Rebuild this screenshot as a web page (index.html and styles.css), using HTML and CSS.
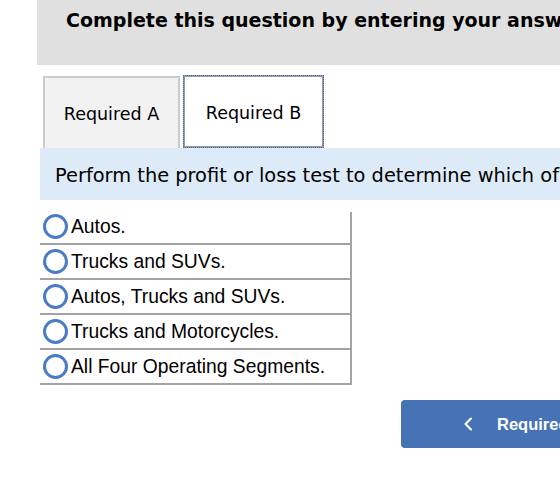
FILE: index.html
```html
<!DOCTYPE html>
<html lang="en">
<head>
<meta charset="utf-8">
<title>Required B</title>
<link rel="stylesheet" href="styles.css">
</head>
<body>
<div class="page">
  <div class="header">
    <h2 class="header-title">Complete this question by entering your answers in the tabs below.</h2>
  </div>
  <div class="tabs">
    <div class="tab">Required A</div>
    <div class="tab tab-active">Required B</div>
  </div>
  <div class="prompt">Perform the profit or loss test to determine which of the operating segments are reportable segments.</div>
  <div class="options">
    <label class="option"><span class="radio"></span><span class="option-text">Autos.</span></label>
    <label class="option"><span class="radio"></span><span class="option-text">Trucks and SUVs.</span></label>
    <label class="option"><span class="radio"></span><span class="option-text">Autos, Trucks and SUVs.</span></label>
    <label class="option"><span class="radio"></span><span class="option-text">Trucks and Motorcycles.</span></label>
    <label class="option"><span class="radio"></span><span class="option-text">All Four Operating Segments.</span></label>
  </div>
  <div class="nav">
    <button class="nav-btn" type="button">
      <svg class="chev" width="10" height="14" viewBox="0 0 10 14"><polyline points="8,1.5 2.5,7 8,12.5" fill="none" stroke="#ffffff" stroke-width="2" stroke-linecap="round" stroke-linejoin="round"/></svg>
      <span class="nav-label">Required A</span>
    </button>
  </div>
</div>
</body>
</html>
```
FILE: styles.css
```css
html, body {
  margin: 0;
  padding: 0;
  background: #ffffff;
  overflow: hidden;
}
.page {
  width: 560px;
  height: 502px;
  overflow: hidden;
  white-space: nowrap;
  font-family: "DejaVu Sans", Verdana, sans-serif;
  color: #000000;
}
.header {
  margin-left: 37px;
  height: 65px;
  background: #e0e0e0;
  padding-left: 29px;
  padding-top: 9px;
  box-sizing: border-box;
  overflow: hidden;
}
.header-title {
  margin: 0;
  font-size: 19px;
  line-height: 22px;
  font-weight: bold;
}
.tabs {
  display: flex;
  gap: 3px;
  margin-top: 10px;
  margin-left: 43px;
  height: 73px;
  align-items: flex-end;
}
.tab {
  box-sizing: border-box;
  height: 72px;
  width: 137px;
  display: flex;
  align-items: center;
  justify-content: center;
  padding-top: 1px;
  font-size: 17.5px;
  background: #f2f2f2;
  border: 2px solid #cbcbcb;
  border-bottom: none;
}
.tab-active {
  width: 141px;
  height: 73px;
  padding-top: 2px;
  background: #ffffff;
  border: 2px solid #9a9a9a;
  outline: 1px dotted #3b6cc4;
  outline-offset: -1px;
}
.prompt {
  margin-left: 40px;
  height: 52px;
  background: #ddebf8;
  display: flex;
  align-items: center;
  padding-left: 15px;
  padding-top: 2px;
  box-sizing: border-box;
  font-size: 19.4px;
  overflow: hidden;
}
.options {
  margin-top: 10px;
  margin-left: 40px;
  width: 312px;
  box-sizing: border-box;
  display: flex;
  flex-direction: column;
}
.option {
  height: 35px;
  box-sizing: border-box;
  border-bottom: 2px solid #a3a3a3;
  border-right: 2px solid #a3a3a3;
  display: flex;
  align-items: center;
  padding-left: 3px;
  font-family: "Liberation Sans", Arial, sans-serif;
  font-size: 19.3px;
}
.option:first-child {
  border-right: none;
  background: linear-gradient(#a3a3a3, #a3a3a3) right 2px / 2px calc(100% - 2px) no-repeat;
}
.radio {
  width: 25px;
  height: 25px;
  box-sizing: border-box;
  border: 3px solid #4a7bc4;
  border-radius: 50%;
  margin-right: 3px;
  flex: none;
}
.nav {
  margin-top: 15px;
  margin-left: 401px;
}
.nav-btn {
  display: flex;
  align-items: center;
  height: 48px;
  width: 260px;
  border: none;
  border-radius: 4px;
  background: #4673b6;
  color: #ffffff;
  padding: 0 0 0 62px;
  font-family: "Liberation Sans", Arial, sans-serif;
  font-size: 16.5px;
  font-weight: bold;
}
.chev {
  display: block;
  margin-right: 24px;
}
.nav-label {
  line-height: 20px;
}
```
